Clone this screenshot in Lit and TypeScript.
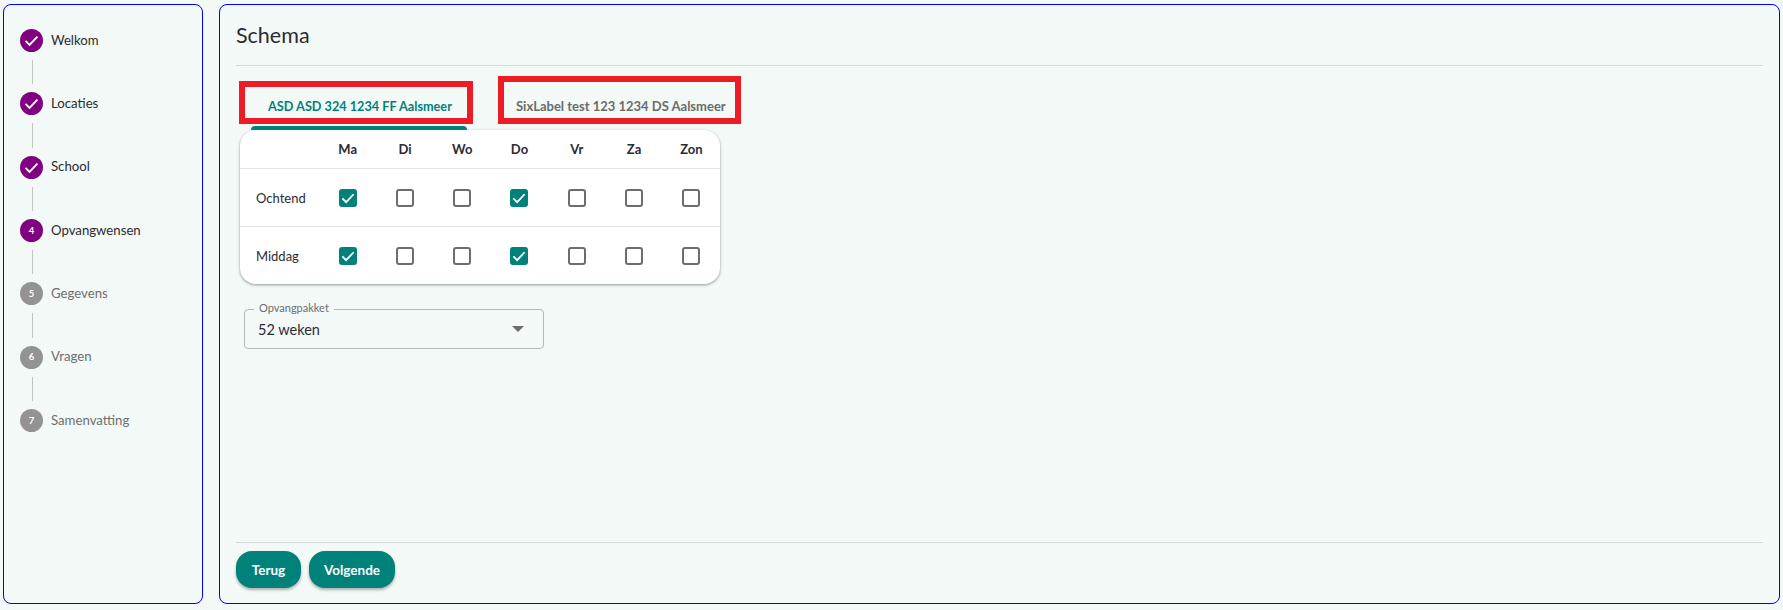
import { html, css, LitElement } from 'lit';
import { customElement } from 'lit/decorators.js';

const steps = [
  { label: 'Welkom', state: 'done' },
  { label: 'Locaties', state: 'done' },
  { label: 'School', state: 'done' },
  { label: 'Opvangwensen', state: 'active', nr: 4 },
  { label: 'Gegevens', state: 'todo', nr: 5 },
  { label: 'Vragen', state: 'todo', nr: 6 },
  { label: 'Samenvatting', state: 'todo', nr: 7 },
];

const days = ['Ma', 'Di', 'Wo', 'Do', 'Vr', 'Za', 'Zon'];
const rows = ['Ochtend', 'Middag'];
const checkedDays = [0, 3];

@customElement('app-root')
export class AppRoot extends LitElement {
  static styles = css`
    :host {
      display: block;
      height: 610px;
      background: #f3f9f7;
      font-family: Lato, 'Noto Sans', 'Liberation Sans', sans-serif;
      color: #2b2b33;
    }
    .page {
      display: grid;
      grid-template-columns: 200px 1561px;
      gap: 16px;
      height: 610px;
      box-sizing: border-box;
      padding: 4px 3px 6px;
    }
    .panel {
      border: 1.5px solid #0000ff;
      border-radius: 8px;
      box-sizing: border-box;
    }
    .stepper {
      padding: 24px 16px 0;
    }
    .step {
      display: flex;
      align-items: center;
      gap: 8px;
      height: 23px;
      font-size: 13.2px;
      line-height: 18px;
    }
    .step span.name {
      margin-top: -2px;
    }
    .step.todo {
      color: #6e6e6e;
    }
    .dot {
      width: 23px;
      height: 23px;
      border-radius: 50%;
      background: #800080;
      color: #fff;
      display: flex;
      align-items: center;
      justify-content: center;
      font-size: 9.5px;
      font-weight: 700;
      flex: none;
    }
    .todo .dot {
      background: #939393;
    }
    .link {
      width: 1px;
      height: 24.35px;
      margin: 8px 0 8px 12px;
      background: #c4c4c4;
    }
    .main {
      display: flex;
      flex-direction: column;
      padding: 0 16px;
    }
    h1 {
      margin: 0;
      font-size: 21.5px;
      font-weight: 400;
      line-height: 60px;
      height: 60px;
      border-bottom: 1px solid #d6dad8;
    }
    .tabs {
      display: flex;
      height: 64px;
      padding-left: 15px;
    }
    .tab {
      position: relative;
      width: 216px;
      padding: 31px 0 0 17px;
      box-sizing: border-box;
      font-size: 12.7px;
      font-weight: 700;
      line-height: 18px;
      color: #008179;
      white-space: nowrap;
    }
    .tab.off {
      color: #6b6b6b;
      font-size: 13px;
      width: 240px;
      margin-left: 32px;
    }
    .tab.on::after {
      content: '';
      position: absolute;
      left: 0;
      right: 0;
      bottom: 0;
      height: 4px;
      background: #008179;
      border-radius: 4px 4px 0 0;
    }
    .mark {
      position: absolute;
      border: 6px solid #ed1c24;
      box-sizing: border-box;
    }
    .mark.a {
      left: -12px;
      top: 15px;
      width: 234px;
      height: 43px;
    }
    .mark.b {
      left: -1px;
      top: 10px;
      width: 243px;
      height: 48px;
    }
    .card {
      width: 480px;
      margin-left: 4px;
      background: #fff;
      border-radius: 16px;
      box-shadow: 0 1px 3px rgba(0, 0, 0, 0.4);
    }
    .row {
      display: grid;
      grid-template-columns: 79px repeat(7, 1fr);
      align-items: center;
      height: 58px;
      padding-top: 1px;
      border-top: 1px solid #e2e4e4;
      box-sizing: border-box;
      font-size: 13px;
    }
    .row.head {
      height: 38px;
      padding-top: 0;
      border-top: 0;
      font-weight: 700;
    }
    .row .label {
      padding-left: 16px;
    }
    .row .cell {
      display: flex;
      justify-content: center;
    }
    .box {
      width: 18px;
      height: 18px;
      box-sizing: border-box;
      border: 2px solid #6d6d6d;
      border-radius: 3px;
    }
    .box.on {
      background: #008179;
      border: 0;
      display: flex;
      align-items: center;
      justify-content: center;
    }
    .select {
      position: relative;
      width: 300px;
      height: 40px;
      margin: 25px 0 0 8px;
      box-sizing: border-box;
      border: 1px solid #b4b8b7;
      border-radius: 4px;
      display: flex;
      align-items: center;
      justify-content: space-between;
      padding: 0 19px 0 13px;
      font-size: 14.5px;
    }
    .legend {
      position: absolute;
      left: 9px;
      top: -9px;
      padding: 0 5px;
      background: #f3f9f7;
      font-size: 11px;
      line-height: 14px;
      color: #6e6e6e;
    }
    .arrow {
      width: 0;
      height: 0;
      border: 6px solid transparent;
      border-top: 6px solid #6d6d6d;
      border-bottom: 0;
    }
    .footer {
      margin-top: auto;
      margin-bottom: 15px;
      border-top: 1px solid #d6dad8;
      padding-top: 8px;
      display: flex;
      gap: 8px;
    }
    button {
      height: 37px;
      border: 0;
      border-radius: 16px;
      background: #008179;
      color: #fff;
      font: 700 13.5px Lato, 'Noto Sans', 'Liberation Sans', sans-serif;
      padding: 0;
      box-shadow: 0 2px 3px rgba(0, 0, 0, 0.3);
    }
    button.back {
      width: 65px;
    }
    button.next {
      width: 86px;
    }
  `;

  private renderCheck(size: number) {
    return html`<svg width=${size} height=${size} viewBox="0 0 24 24">
      <path d="M4.5 12.5l5 5L19.5 7" fill="none" stroke="#fff" stroke-width="2.4" />
    </svg>`;
  }

  private renderStep(step: (typeof steps)[number], i: number) {
    return html`
      ${i > 0 ? html`<div class="link"></div>` : ''}
      <div class="step ${step.state}">
        <div class="dot">${step.state === 'done' ? this.renderCheck(19) : step.nr}</div>
        <span class="name">${step.label}</span>
      </div>
    `;
  }

  private renderBox(on: boolean) {
    return on
      ? html`<div class="box on">${this.renderCheck(18)}</div>`
      : html`<div class="box"></div>`;
  }

  protected render() {
    return html`
      <div class="page">
        <nav class="panel stepper">${steps.map((s, i) => this.renderStep(s, i))}</nav>
        <section class="panel main">
          <h1>Schema</h1>
          <div class="tabs">
            <div class="tab on">
              ASD ASD 324 1234 FF Aalsmeer
              <div class="mark a"></div>
            </div>
            <div class="tab off">
              SixLabel test 123 1234 DS Aalsmeer
              <div class="mark b"></div>
            </div>
          </div>
          <div class="card">
            <div class="row head">
              <div></div>
              ${days.map(d => html`<div class="cell">${d}</div>`)}
            </div>
            ${rows.map(
              r => html`<div class="row">
                <div class="label">${r}</div>
                ${days.map(
                  (_, i) => html`<div class="cell">${this.renderBox(checkedDays.includes(i))}</div>`
                )}
              </div>`
            )}
          </div>
          <div class="select">
            <span class="legend">Opvangpakket</span>
            <span>52 weken</span>
            <span class="arrow"></span>
          </div>
          <div class="footer">
            <button class="back">Terug</button>
            <button class="next">Volgende</button>
          </div>
        </section>
      </div>
    `;
  }
}
